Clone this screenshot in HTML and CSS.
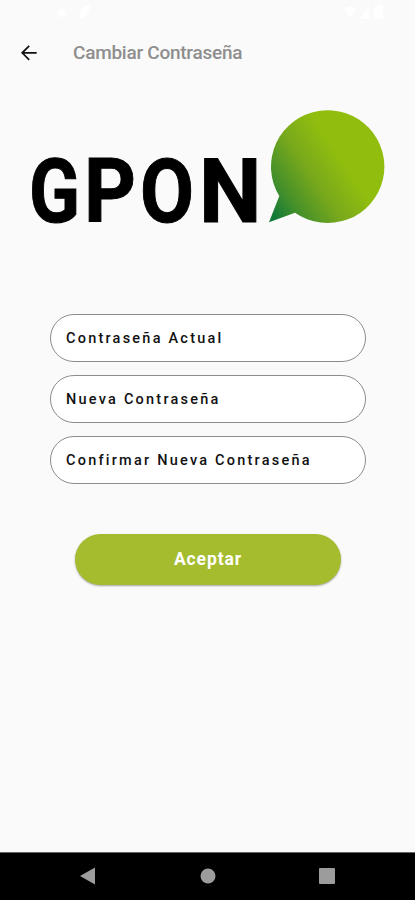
FILE: index.html
```
<!DOCTYPE html>
<html lang="es">
  <head>
    <meta charset="UTF-8" />
    <meta name="viewport" content="width=device-width, initial-scale=1.0" />
    <title>Cambiar Contraseña</title>
    <link rel="stylesheet" href="styles.css">
  </head>
  <body>
    <!-- white status icons, almost invisible on the light background -->
    <div class="status">
      <svg width="415" height="24" fill="#fff">
        <circle cx="62" cy="13" r="4" />
        <path d="M82 8l8-3-2 9-7 5-2-3z" />
        <path d="M344 9q6-5 12 0l-6 8zM360 19l9-13v13zM374 19V8l3-3h6v14z" />
      </svg>
    </div>
    <div class="header">
      <a class="back" href="#" aria-label="Volver">
        <svg width="18" height="18" viewBox="0 0 18 18" fill="none" stroke="#111" stroke-width="1.7">
          <path d="M16.7 8.8H2.2M9.2 1.8l-7 7 7 7" />
        </svg>
      </a>
      <h1 class="title">Cambiar Contraseña</h1>
    </div>

    <div class="logo">
      <svg width="415" height="150" viewBox="0 105 415 150">
        <defs>
          <linearGradient id="bubble" gradientUnits="userSpaceOnUse" x1="272" y1="212" x2="344" y2="164">
            <stop offset="0" stop-color="#127a38" />
            <stop offset=".25" stop-color="#45902a" />
            <stop offset=".6" stop-color="#76a81c" />
            <stop offset="1" stop-color="#91bd0e" />
          </linearGradient>
        </defs>
        <g class="logo-text">
          <text x="29" y="221.500" textLength="51" lengthAdjust="spacingAndGlyphs">G</text>
          <text x="84" y="221.500" textLength="52" lengthAdjust="spacingAndGlyphs">P</text>
          <text x="140" y="221.500" textLength="54" lengthAdjust="spacingAndGlyphs">O</text>
          <text x="199" y="221.500" textLength="62.500" lengthAdjust="spacingAndGlyphs">N</text>
        </g>
        <path fill="url(#bubble)" d="M269 222.300L279.300 196A56.700 56.400 0 1 1 295 212.700Z" />
      </svg>
    </div>

    <form class="form" autocomplete="off" action="#">
      <input class="field" type="password" placeholder="Contraseña Actual" />
      <input class="field" type="password" placeholder="Nueva Contraseña" />
      <input class="field" type="password" placeholder="Confirmar Nueva Contraseña" />
      <button class="submit" type="button">Aceptar</button>
    </form>

    <div class="navbar">
      <svg width="18" height="18" fill="#9c9c9c"><path d="M1 9L16 .5v17z" /></svg>
      <svg width="18" height="18" fill="#9c9c9c"><circle cx="9" cy="9" r="7.500" /></svg>
      <svg width="18" height="18" fill="#9c9c9c"><rect x="1" y="1" width="16" height="16" rx="1" /></svg>
    </div>
  </body>
</html>
```
FILE: styles.css
```
* {
  box-sizing: border-box;
}
body {
  margin: 0;
  height: 900px;
  display: flex;
  flex-direction: column;
  background-color: #fafafa;
  font-family: Roboto, sans-serif;
  overflow: hidden;
}
svg {
  display: block;
}
.status {
  height: 24px;
}
.header {
  height: 57px;
  display: flex;
  align-items: center;
  padding-left: 20px;
}
.back {
  width: 53px;
}
.title {
  margin: 0;
  font-size: 19px;
  font-weight: 500;
  letter-spacing: -0.26px;
  color: #8e8e8e;
}
.logo {
  padding-top: 24px;
}
.logo-text {
  font-size: 89px;
  font-weight: 700;
  stroke: #000;
  stroke-width: 1;
}
.form {
  display: flex;
  flex-direction: column;
  gap: 13px;
  padding: 59px 49px 0 50px;
}
.field {
  height: 48px;
  padding: 0 15px;
  border: 1px solid #8c8c8c;
  border-radius: 24px;
  background-color: #fff;
  font-family: Roboto, sans-serif;
  font-size: 14.5px;
  letter-spacing: 2.23px;
}
.field::placeholder {
  color: #111;
  font-weight: 500;
}
.submit {
  height: 51px;
  margin: 37px 25px 0;
  padding-bottom: 3px;
  border: none;
  border-radius: 26px;
  background-color: #a4bc2e;
  box-shadow: 0 1px 2px rgba(0, 0, 0, 0.35);
  color: #fff;
  font-family: Roboto, sans-serif;
  font-size: 17.5px;
  font-weight: 700;
  letter-spacing: 0.9px;
}
.navbar {
  height: 48px;
  margin-top: auto;
  display: flex;
  justify-content: space-between;
  align-items: center;
  padding: 0 79px 1px;
  border-top: 1px solid #666;
  background-color: #000;
}
```
